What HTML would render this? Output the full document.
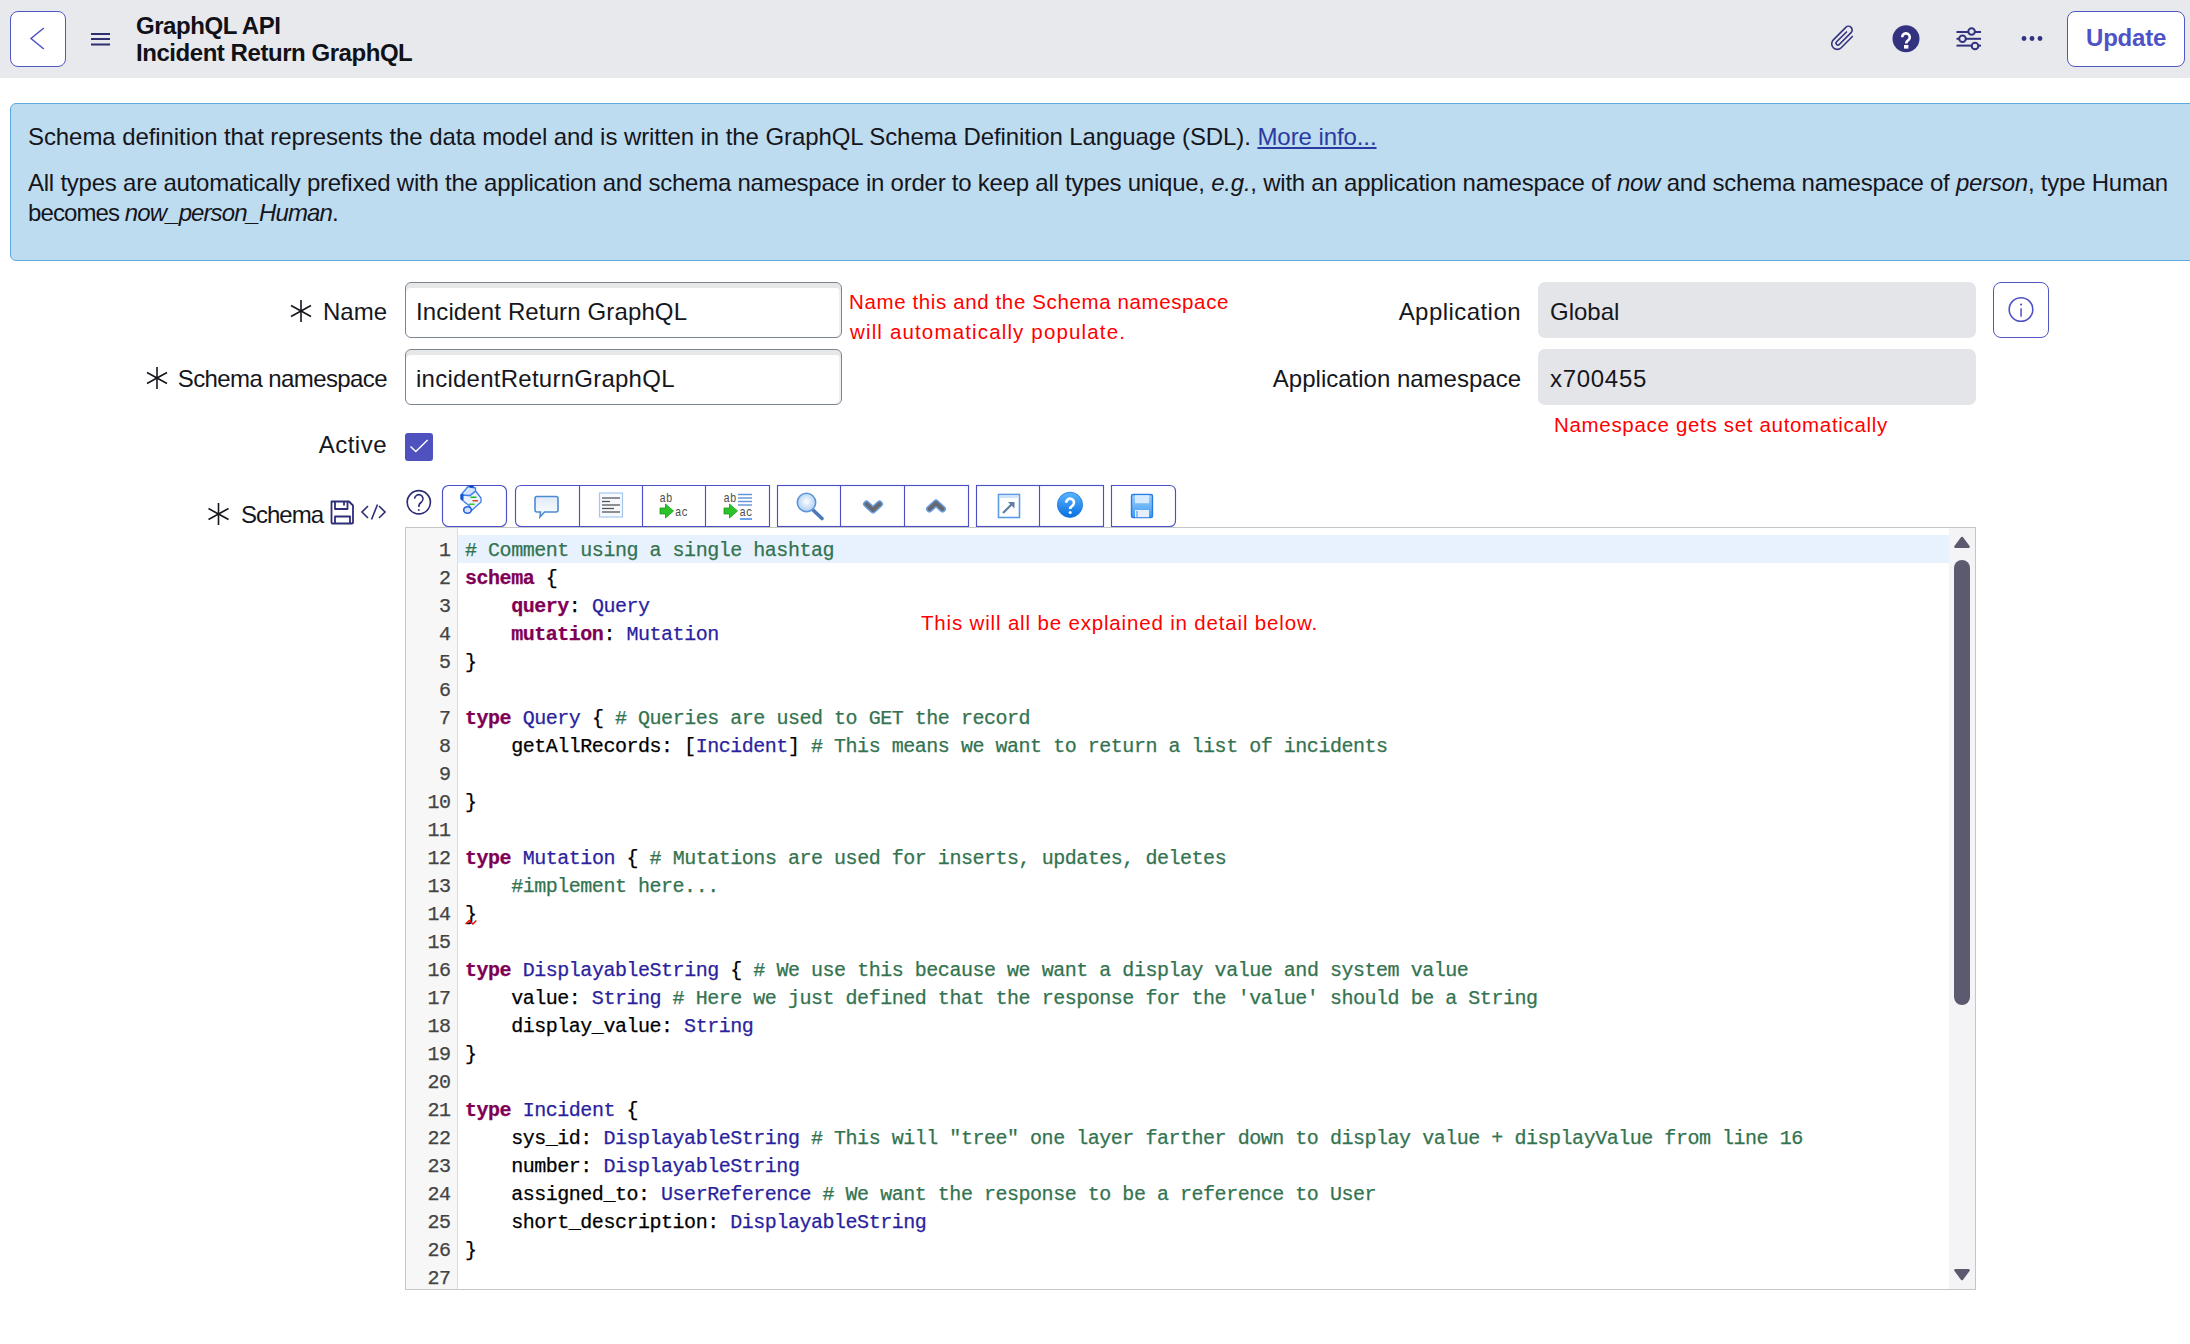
<!DOCTYPE html>
<html><head><meta charset="utf-8">
<style>
*{box-sizing:border-box}
html,body{margin:0;padding:0;background:#fff;width:2190px;height:1344px;overflow:hidden;position:relative}
body{font-family:"Liberation Sans",sans-serif;color:#16161d}
.abs{position:absolute}
.hdr{position:absolute;left:0;top:0;width:2190px;height:78px;background:#e8e9ed}
.btn{position:absolute;background:#fff;border:1.25px solid #5156c2;border-radius:8px}
.title{position:absolute;left:136px;font-weight:bold;font-size:24px;line-height:27px;white-space:nowrap;color:#111118;letter-spacing:-0.45px}
.info{position:absolute;left:10px;top:103px;width:2200px;height:158px;background:#bedcf0;border:1px solid #5eaadf;border-radius:6px}
.it{position:absolute;left:28px;font-size:24px;line-height:30px;white-space:nowrap;color:#15151c}
.lbl{position:absolute;font-size:24px;line-height:30px;white-space:nowrap;text-align:right;color:#16161d}
.inp{position:absolute;background:#fff;border:1px solid #7d8491;border-radius:6px;box-shadow:inset 0 5px 0 #e6e8e8, inset -2px 0 1px #eef0f0}
.ro{position:absolute;background:#e4e5e9;border-radius:7px}
.val{position:absolute;font-size:24px;line-height:30px;white-space:nowrap;color:#16161d}
.red{position:absolute;color:#ff0000;font-size:20.5px;line-height:29px;white-space:nowrap}
.tb{position:absolute;top:485px;height:42px;border:1.5px solid #4b50c4;background:#fff}
.tbd{position:absolute;top:485px;width:1.5px;height:42px;background:#4b50c4}
.ed{position:absolute;left:405px;top:527px;width:1571px;height:763px;border:1px solid #c6c6c6;background:#fff;overflow:hidden}
.gut{position:absolute;left:0;top:0;width:52px;height:761px;background:#f7f7f7;border-right:1px solid #dddddd}
.nums{position:absolute;left:0;top:8.5px;width:44.5px;text-align:right;font-family:"Liberation Mono",monospace;font-size:20px;letter-spacing:-0.45px;line-height:28px;color:#444;-webkit-text-stroke:0.25px currentColor}
.hl{position:absolute;left:52px;top:7px;width:1491px;height:28px;background:#e8f2fe}
.code{position:absolute;left:59px;top:8.5px;font-family:"Liberation Mono",monospace;font-size:20px;letter-spacing:-0.47px;line-height:28px;color:#000;white-space:pre;-webkit-text-stroke:0.25px currentColor}
.ln{height:28px}
.k{color:#7f0055;font-weight:bold}
.t{color:#2a1f9e}
.c{color:#33734f}
.sq{position:relative}
.sb{position:absolute;left:1543px;top:0;width:26px;height:761px;background:#f4f4f6}
</style></head><body>
<!-- HEADER -->
<div class="hdr"></div>
<div class="btn" style="left:10px;top:11px;width:56px;height:56px"></div>
<svg class="abs" style="left:0;top:0" width="2190" height="78">
  <polyline points="43.8,28 31,38.5 43.8,49" fill="none" stroke="#4f52c4" stroke-width="1.5"/>
  <rect x="91" y="33" width="19" height="2" fill="#2e2e72"/>
  <rect x="91" y="38" width="19" height="2" fill="#2e2e72"/>
  <rect x="91" y="43.5" width="19" height="2" fill="#2e2e72"/>
</svg>
<div class="title" style="top:12px">GraphQL API</div>
<div class="title" style="top:39px">Incident Return GraphQL</div>
<!-- RIGHT ICONS -->
<svg class="abs" style="left:1820px;top:10px" width="240" height="60">
  <!-- paperclip -->
  <g transform="translate(24.5,30.5) rotate(45) scale(0.93)" fill="none" stroke="#32327f" stroke-width="1.7" stroke-linecap="round">
    <path d="M3,-9 L3,8 A6,6 0 0 1 -9,8 L-9,-11 A4,4 0 0 1 -1,-11 L-1,7 A2,2 0 0 1 -5,7 L-5,-8"/>
  </g>
  <!-- question -->
  <circle cx="86" cy="28.8" r="13.5" fill="#32327f"/>
  <path d="M82.2,27.2 A3.8,3.8 0 1 1 88.3,30.2 C86.6,31.2 86.2,31.8 86.2,33.5" fill="none" stroke="#fff" stroke-width="2.6"/>
  <rect x="84" y="35" width="4.4" height="3.6" fill="#fff"/>
  <!-- sliders -->
  <g stroke="#32327f" stroke-width="2" fill="#e8e9ed">
    <line x1="136.5" y1="22" x2="161" y2="22"/>
    <line x1="136.5" y1="28.8" x2="161" y2="28.8"/>
    <line x1="136.5" y1="35.6" x2="161" y2="35.6"/>
    <circle cx="151.6" cy="21.5" r="3.3"/>
    <circle cx="142.5" cy="28.8" r="3.3"/>
    <circle cx="155" cy="36" r="3.3"/>
  </g>
  <!-- dots -->
  <circle cx="204" cy="28.5" r="2.4" fill="#32327f"/>
  <circle cx="212" cy="28.5" r="2.4" fill="#32327f"/>
  <circle cx="220" cy="28.5" r="2.4" fill="#32327f"/>
</svg>
<div class="btn" style="left:2067px;top:11px;width:118px;height:56px"></div>
<div class="abs" style="left:2086px;top:24px;font-size:24px;font-weight:bold;color:#4e52c6;line-height:27px;letter-spacing:-0.2px">Update</div>

<!-- INFO -->
<div class="info"></div>
<div class="it" style="top:122px;letter-spacing:-0.08px">Schema definition that represents the data model and is written in the GraphQL Schema Definition Language (SDL). <span style="color:#2a3aa0;text-decoration:underline">More info...</span></div>
<div class="it" style="top:168px;letter-spacing:-0.235px">All types are automatically prefixed with the application and schema namespace in order to keep all types unique, <i>e.g.</i>, with an application namespace of <i>now</i> and schema namespace of <i>person</i>, type Human</div>
<div class="it" style="top:198px;letter-spacing:-0.9px">becomes <i>now_person_Human</i>.</div>

<!-- FORM LEFT -->
<svg class="abs" style="left:0;top:270px" width="400" height="270">
  <g stroke="#16161d" stroke-width="1.6" fill="none">
    <g transform="translate(301,41)"><line x1="0" y1="-11" x2="0" y2="11"/><line x1="-10" y1="-5.5" x2="10" y2="5.5"/><line x1="-10" y1="5.5" x2="10" y2="-5.5"/></g>
    <g transform="translate(157,108)"><line x1="0" y1="-11" x2="0" y2="11"/><line x1="-10" y1="-5.5" x2="10" y2="5.5"/><line x1="-10" y1="5.5" x2="10" y2="-5.5"/></g>
    <g transform="translate(218.5,244)"><line x1="0" y1="-11" x2="0" y2="11"/><line x1="-10" y1="-5.5" x2="10" y2="5.5"/><line x1="-10" y1="5.5" x2="10" y2="-5.5"/></g>
  </g>
</svg>
<div class="lbl" style="right:1803px;top:297px">Name</div>
<div class="lbl" style="right:1803px;top:364px;letter-spacing:-0.6px">Schema namespace</div>
<div class="lbl" style="right:1803px;top:430px;letter-spacing:0.5px">Active</div>
<div class="lbl" style="left:241px;top:500px;letter-spacing:-1.0px">Schema</div>

<div class="inp" style="left:405px;top:282px;width:437px;height:56px"></div>
<div class="val" style="left:416px;top:297px;letter-spacing:0.13px">Incident Return GraphQL</div>
<div class="inp" style="left:405px;top:349px;width:437px;height:56px"></div>
<div class="val" style="left:416px;top:364px;letter-spacing:0.25px">incidentReturnGraphQL</div>
<div class="abs" style="left:405px;top:433px;width:28px;height:28px;background:#4f52be;border-radius:3px"></div>
<svg class="abs" style="left:405px;top:433px" width="28" height="28"><polyline points="5.5,13.6 10.8,18.6 22.6,6.9" fill="none" stroke="#fff" stroke-width="1.4"/></svg>

<div class="red" style="left:849px;top:287px;letter-spacing:0.62px">Name this and the Schema namespace</div>
<div class="red" style="left:850px;top:317px;letter-spacing:1.15px">will automatically populate.</div>

<!-- FORM RIGHT -->
<div class="lbl" style="right:669px;top:297px;letter-spacing:0.45px">Application</div>
<div class="lbl" style="right:669px;top:364px">Application namespace</div>
<div class="ro" style="left:1538px;top:282px;width:438px;height:56px"></div>
<div class="val" style="left:1550px;top:297px">Global</div>
<div class="ro" style="left:1538px;top:349px;width:438px;height:56px"></div>
<div class="val" style="left:1550px;top:364px;letter-spacing:0.7px">x700455</div>
<div class="btn" style="left:1993px;top:282px;width:56px;height:56px"></div>
<svg class="abs" style="left:1993px;top:282px" width="56" height="56">
  <circle cx="28" cy="27.5" r="11.8" fill="none" stroke="#4f52c4" stroke-width="1.6"/>
  <rect x="27.3" y="26.3" width="1.5" height="8.4" fill="#4f52c4"/>
  <circle cx="28.1" cy="22.5" r="1.1" fill="#4f52c4"/>
</svg>
<div class="red" style="left:1554px;top:410px;letter-spacing:0.68px">Namespace gets set automatically</div>

<!-- SCHEMA ICONS -->

<!-- TOOLBAR -->
<svg class="abs" style="left:0;top:0;pointer-events:none" width="1200" height="540" viewBox="0 0 1200 540">
  <defs>
    <linearGradient id="bub" x1="0" y1="0" x2="0" y2="1"><stop offset="0" stop-color="#dfeaf7"/><stop offset="1" stop-color="#ffffff"/></linearGradient>
    <radialGradient id="mag" cx="0.5" cy="0.45" r="0.55"><stop offset="0" stop-color="#ffffff"/><stop offset="1" stop-color="#a9cdf3"/></radialGradient>
    <linearGradient id="hlp" x1="0" y1="0" x2="0" y2="1"><stop offset="0" stop-color="#5ab4ff"/><stop offset="1" stop-color="#0a6fe0"/></linearGradient>
    <linearGradient id="flp" x1="0" y1="0" x2="0" y2="1"><stop offset="0" stop-color="#9fd0ff"/><stop offset="1" stop-color="#3d9cf0"/></linearGradient>
  </defs>
  <!-- schema label icons -->
  <g fill="none" stroke="#2e2e78" stroke-width="1.8" stroke-linejoin="round">
    <path d="M331.5,501.5 H349 L353,505.5 V522.5 Q353,523.5 352,523.5 H332.5 Q331.5,523.5 331.5,522.5 Z"/>
    <path d="M335,501.5 V509 H347.5 V501.5"/>
    <path d="M344,502 V505.5"/>
    <path d="M335,523.5 V516.5 H350 V523.5"/>
  </g>
  <g fill="none" stroke="#2e2e78" stroke-width="1.6" stroke-linejoin="miter">
    <polyline points="368,506 362,512 368,518"/>
    <line x1="377.5" y1="504.5" x2="371.5" y2="519.5"/>
    <polyline points="379,506 385,512 379,518"/>
  </g>
  <!-- help circle -->
  <circle cx="418.8" cy="502.3" r="11.6" fill="none" stroke="#2e2e78" stroke-width="1.7"/>
  <path d="M414.6,498.8 A4.2,4.2 0 1 1 421.6,502 C419.3,503.2 418.8,504.2 418.8,507" fill="none" stroke="#2e2e78" stroke-width="1.6"/>
  <circle cx="418.8" cy="510" r="0.9" fill="#2e2e78"/>

  <!-- button group borders -->
  <g fill="#fff" stroke="#4b50c4" stroke-width="1.15">
    <rect x="442.5" y="485.5" width="64" height="41" rx="6"/>
    <path d="M769.5,485.5 H521.5 Q515.5,485.5 515.5,491.5 V520.5 Q515.5,526.5 521.5,526.5 H769.5 Z"/>
    <rect x="777.5" y="485.5" width="191" height="41"/>
    <rect x="976.5" y="485.5" width="127" height="41"/>
    <path d="M1111.5,485.5 H1169.5 Q1175.5,485.5 1175.5,491.5 V520.5 Q1175.5,526.5 1169.5,526.5 H1111.5 Z"/>
  </g>
  <g stroke="#4b50c4" stroke-width="1.15">
    <line x1="579.5" y1="486" x2="579.5" y2="526"/>
    <line x1="642.5" y1="486" x2="642.5" y2="526"/>
    <line x1="705.5" y1="486" x2="705.5" y2="526"/>
    <line x1="840.5" y1="486" x2="840.5" y2="526"/>
    <line x1="904.5" y1="486" x2="904.5" y2="526"/>
    <line x1="1039.5" y1="486" x2="1039.5" y2="526"/>
  </g>

  <!-- 1 script icon -->
  <g stroke-linejoin="round">
    <path d="M461,495 L470,495.5 L475.5,491 L481,498 L481,502 L471,511 L469.5,506 L461,499 Z" fill="#eaf2fd" stroke="#3f7ee8" stroke-width="1.3"/>
    <path d="M468,486.5 L475.5,488 L475.5,491 L470,495.5 L461,495 Z" fill="#d3e4fb" stroke="#3f7ee8" stroke-width="1.3"/>
    <path d="M461,495 L463,494 L463,500 L461,499 Z" fill="#1553d0" stroke="#1553d0" stroke-width="1"/>
    <ellipse cx="467.5" cy="510" rx="3.8" ry="3.3" fill="#d3e4fb" stroke="#2a64d8" stroke-width="1.6"/>
    <ellipse cx="471.5" cy="486.5" rx="2.4" ry="1.2" fill="#0a47c8"/>
    <line x1="471" y1="497.3" x2="476" y2="497.3" stroke="#19b81e" stroke-width="1.4" stroke-linecap="round"/>
    <line x1="473" y1="500.8" x2="477.5" y2="500.8" stroke="#e0442e" stroke-width="1.4" stroke-linecap="round"/>
    <line x1="469.5" y1="504.3" x2="474" y2="504.3" stroke="#2ac82a" stroke-width="1.4" stroke-linecap="round"/>
  </g>
  <!-- 2 comment bubble -->
  <path d="M537,496.5 H556 Q558,496.5 558,498.5 V510 Q558,512 556,512 H544.5 L540,517 L540.5,512 H537 Q535,512 535,510 V498.5 Q535,496.5 537,496.5 Z" fill="url(#bub)" stroke="#4d8ad4" stroke-width="1.6"/>
  <!-- 3 format -->
  <rect x="599.5" y="493" width="23" height="24" fill="#f6f9fe" stroke="#a7c6ee" stroke-width="1.2"/>
  <g stroke="#555" stroke-width="1.3">
    <line x1="602" y1="498" x2="620" y2="498"/>
    <line x1="602" y1="501.5" x2="610" y2="501.5"/>
    <line x1="602" y1="505" x2="620" y2="505"/>
    <line x1="602" y1="508.5" x2="614" y2="508.5"/>
    <line x1="602" y1="512" x2="620" y2="512"/>
  </g>
  <!-- 4 ab -> ac -->
  <g font-family="Liberation Mono" font-size="13" fill="#4d4d4d">
    <text transform="translate(659.5,502) scale(0.82,1)">ab</text>
    <text transform="translate(675,516) scale(0.82,1)">ac</text>
    <text transform="translate(723.5,502) scale(0.82,1)">ab</text>
    <text transform="translate(739.5,516) scale(0.82,1)">ac</text>
  </g>
  <path d="M660,508 H665.5 V504 L673.5,511 L665.5,518 V514 H660 Z" fill="#2cc22c" stroke="#189918" stroke-width="0.8"/>
  <!-- 5 with lines -->
  <g stroke="#5d93d6" stroke-width="1.4">
    <line x1="738" y1="494.5" x2="752" y2="494.5"/>
    <line x1="738" y1="498" x2="752" y2="498"/>
    <line x1="738" y1="501.5" x2="752" y2="501.5"/>
    <line x1="738" y1="505" x2="752" y2="505"/>
    <line x1="740" y1="519" x2="752" y2="519" stroke="#2f7be8"/>
  </g>
  <path d="M724,508 H729.5 V504 L737.5,511 L729.5,518 V514 H724 Z" fill="#2cc22c" stroke="#189918" stroke-width="0.8"/>
  <!-- 6 magnifier -->
  <line x1="813" y1="510" x2="822" y2="518.5" stroke="#4a78b8" stroke-width="3.6" stroke-linecap="round"/>
  <circle cx="806.5" cy="502.5" r="9.2" fill="url(#mag)" stroke="#5d95d8" stroke-width="1.6"/>
  <!-- 7 chevron down -->
  <polyline points="866.5,504 873,510 879.5,504" fill="none" stroke="#5b93dc" stroke-width="7" stroke-linejoin="round" stroke-linecap="round" opacity="0.9"/>
  <polyline points="866.5,504 873,510 879.5,504" fill="none" stroke="#666a70" stroke-width="4" stroke-linejoin="round" stroke-linecap="round"/>
  <!-- 8 chevron up -->
  <polyline points="929.5,509 936,503 942.5,509" fill="none" stroke="#5b93dc" stroke-width="7" stroke-linejoin="round" stroke-linecap="round" opacity="0.9"/>
  <polyline points="929.5,509 936,503 942.5,509" fill="none" stroke="#666a70" stroke-width="4" stroke-linejoin="round" stroke-linecap="round"/>
  <!-- 9 expand -->
  <rect x="998.5" y="494.5" width="21" height="23" fill="#fff" stroke="#5a9ae6" stroke-width="1.6"/>
  <rect x="999.5" y="495.5" width="19" height="2.5" fill="#cfe3f9"/>
  <line x1="1003" y1="513" x2="1012" y2="504" stroke="#5f7fa8" stroke-width="2.2"/>
  <path d="M1008,502 H1014.5 V508.5 Z" fill="#5f7fa8"/>
  <!-- 10 help blue -->
  <circle cx="1070" cy="504.8" r="12.6" fill="url(#hlp)" stroke="#1b73d8" stroke-width="0.8"/>
  <path d="M1066.2,502.8 A3.9,3.9 0 1 1 1072.6,505.6 C1070.8,506.6 1070.2,507.2 1070.2,509" fill="none" stroke="#fff" stroke-width="2.7"/>
  <circle cx="1070.2" cy="512.6" r="1.5" fill="#fff"/>
  <!-- 11 floppy -->
  <rect x="1131.5" y="494.5" width="21" height="23" rx="1.5" fill="url(#flp)" stroke="#2a7de6" stroke-width="1.4"/>
  <rect x="1135" y="495.2" width="14" height="8" fill="#d6ebff"/>
  <rect x="1135" y="510" width="14" height="7.2" fill="#e4effa"/>
  <line x1="1137" y1="511" x2="1137" y2="517" stroke="#3a87e8" stroke-width="1"/>
</svg>

<!-- EDITOR -->
<div class="ed">
  <div class="gut"><div class="nums"><div>1</div><div>2</div><div>3</div><div>4</div><div>5</div><div>6</div><div>7</div><div>8</div><div>9</div><div>10</div><div>11</div><div>12</div><div>13</div><div>14</div><div>15</div><div>16</div><div>17</div><div>18</div><div>19</div><div>20</div><div>21</div><div>22</div><div>23</div><div>24</div><div>25</div><div>26</div><div>27</div></div></div>
  <div class="hl"></div>
  <div class="code"><div class="ln"><span class="c"># Comment using a single hashtag</span></div><div class="ln"><span class="k">schema</span> {</div><div class="ln">    <span class="k">query</span>: <span class="t">Query</span></div><div class="ln">    <span class="k">mutation</span>: <span class="t">Mutation</span></div><div class="ln">}</div><div class="ln"></div><div class="ln"><span class="k">type</span> <span class="t">Query</span> { <span class="c"># Queries are used to GET the record</span></div><div class="ln">    getAllRecords: [<span class="t">Incident</span>] <span class="c"># This means we want to return a list of incidents</span></div><div class="ln"></div><div class="ln">}</div><div class="ln"></div><div class="ln"><span class="k">type</span> <span class="t">Mutation</span> { <span class="c"># Mutations are used for inserts, updates, deletes</span></div><div class="ln">    <span class="c">#implement here...</span></div><div class="ln"><span class="sq">}</span></div><div class="ln"></div><div class="ln"><span class="k">type</span> <span class="t">DisplayableString</span> { <span class="c"># We use this because we want a display value and system value</span></div><div class="ln">    value: <span class="t">String</span> <span class="c"># Here we just defined that the response for the 'value' should be a String</span></div><div class="ln">    display_value: <span class="t">String</span></div><div class="ln">}</div><div class="ln"></div><div class="ln"><span class="k">type</span> <span class="t">Incident</span> {</div><div class="ln">    sys_id: <span class="t">DisplayableString</span> <span class="c"># This will "tree" one layer farther down to display value + displayValue from line 16</span></div><div class="ln">    number: <span class="t">DisplayableString</span></div><div class="ln">    assigned_to: <span class="t">UserReference</span> <span class="c"># We want the response to be a reference to User</span></div><div class="ln">    short_description: <span class="t">DisplayableString</span></div><div class="ln">}</div><div class="ln"></div></div>
  <div class="sb">
    <svg width="26" height="761" style="position:absolute;left:0;top:0">
      <path d="M13,10 L19.5,18.8 L6.5,18.8 Z" fill="#5c5a6e" stroke="#5c5a6e" stroke-width="2.6" stroke-linejoin="round"/>
      <rect x="5" y="32" width="16" height="445" rx="8" fill="#5c5a6e"/>
      <path d="M13,751 L19.5,742.2 L6.5,742.2 Z" fill="#5c5a6e" stroke="#5c5a6e" stroke-width="2.6" stroke-linejoin="round"/>
    </svg>
  </div>
</div>
<svg class="abs" style="left:460px;top:915px" width="24" height="14"><polyline points="5.5,9 9.3,5.5 12.9,9 16.3,5.5" fill="none" stroke="#ff0000" stroke-width="1.3"/></svg>
<div class="red" style="left:921px;top:608px;letter-spacing:0.83px">This will all be explained in detail below.</div>
</body></html>
